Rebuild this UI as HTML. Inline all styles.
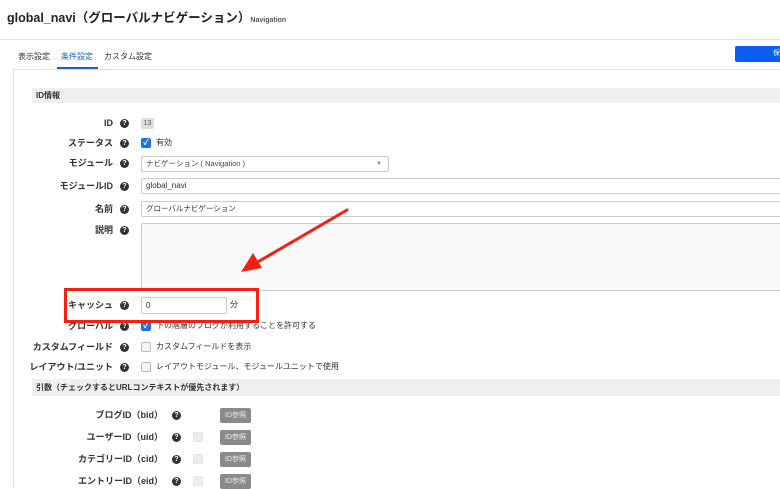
<!DOCTYPE html>
<html><head><meta charset="utf-8"><style>
*{margin:0;padding:0;box-sizing:border-box}
body{width:780px;height:487px;overflow:hidden;background:#fff;font-family:"Liberation Sans","Noto Sans CJK JP",sans-serif;color:#333;position:relative;line-height:1}
.a{position:absolute;white-space:nowrap}
.lbl{position:absolute;font-size:9px;line-height:11px;font-weight:bold;color:#333;text-align:right;white-space:nowrap}
.q{position:absolute;width:9px;height:9px;border-radius:50%;background:#333;color:#fff;font-size:7px;font-weight:bold;text-align:center;line-height:9px}
.in{position:absolute;border:1px solid #ccc;border-radius:2px;background:#fff;font-size:8px;color:#333;padding-left:4px}
.cb{position:absolute;width:10px;height:10px;border:1px solid #bbb;border-radius:2px;background:#f5f5f5}
.cbon{position:absolute;width:10px;height:10px;border-radius:2px;background:#1a73e8;color:#fff;font-size:8px;line-height:10px;text-align:center;font-weight:bold}
.t{position:absolute;font-size:8px;line-height:10px;color:#333;white-space:nowrap}
.btn{position:absolute;width:31px;height:15px;background:#8a8a8a;border-radius:2px;color:#eee;font-size:7px;text-align:center;line-height:15px}
.hd{position:absolute;left:32px;width:748px;background:#efefef;font-size:8px;font-weight:bold;padding-left:4px}
</style></head><body>
<div class="a" style="left:7px;top:11px;font-size:12.5px;line-height:15px;font-weight:bold;color:#222">global_navi（グローバルナビゲーション）<span style="font-size:7px;font-weight:bold;color:#555">Navigation</span></div>
<div class="a" style="left:0;top:39px;width:780px;height:1px;background:#e2e2e2"></div>
<div class="a" style="left:18px;top:52px;font-size:8px;line-height:10px;color:#333">表示設定</div>
<div class="a" style="left:61px;top:52px;font-size:8px;line-height:10px;color:#1a5fd0">条件設定</div>
<div class="a" style="left:57px;top:67px;width:41px;height:2px;background:#1a5fd0"></div>
<div class="a" style="left:104px;top:52px;font-size:8px;line-height:10px;color:#333">カスタム設定</div>
<div class="a" style="left:735px;top:46px;width:50px;height:16px;background:#0a5ef0;border-radius:2px;color:#fff;font-size:7px;line-height:16px;padding-left:38px">保</div>
<div class="a" style="left:13px;top:69px;width:767px;height:1px;background:#e0e0e0"></div>
<div class="a" style="left:13px;top:69px;width:1px;height:418px;background:#e0e0e0"></div>

<div class="hd" style="top:88px;height:15px;line-height:15px">ID情報</div>

<div class="lbl" style="right:667px;top:118px">ID</div><div class="q" style="left:120px;top:119px">?</div>
<div class="a" style="left:141px;top:118px;width:13px;height:11px;background:#ddd;border-radius:2px;font-size:7px;text-align:center;line-height:11px;color:#555">13</div>

<div class="lbl" style="right:667px;top:138px">ステータス</div><div class="q" style="left:120px;top:139px">?</div>
<div class="cbon" style="left:141px;top:138px">✓</div><div class="t" style="left:156px;top:138px">有効</div>

<div class="lbl" style="right:667px;top:158px">モジュール</div><div class="q" style="left:120px;top:159px">?</div>
<div class="in" style="left:141px;top:156px;width:248px;height:16px;line-height:14px;font-size:7.5px;color:#444">ナビゲーション ( Navigation )<span style="position:absolute;right:6px;top:0;font-size:6px;color:#888">▼</span></div>

<div class="lbl" style="right:667px;top:181px">モジュールID</div><div class="q" style="left:120px;top:182px">?</div>
<div class="in" style="left:141px;top:178px;width:645px;height:16px;line-height:14px">global_navi</div>

<div class="lbl" style="right:667px;top:204px">名前</div><div class="q" style="left:120px;top:205px">?</div>
<div class="in" style="left:141px;top:201px;width:645px;height:16px;line-height:14px;font-size:7.5px">グローバルナビゲーション</div>

<div class="lbl" style="right:667px;top:225px">説明</div><div class="q" style="left:120px;top:226px">?</div>
<div class="in" style="left:141px;top:223px;width:645px;height:68px;background:#fafafa"></div>

<div class="lbl" style="right:667px;top:300px">キャッシュ</div><div class="q" style="left:120px;top:301px">?</div>
<div class="in" style="left:141px;top:297px;width:86px;height:17px;line-height:15px">0</div>
<div class="t" style="left:230px;top:300px">分</div>
<div class="a" style="left:64px;top:288px;width:195px;height:35px;border:3px solid #f4210f;z-index:5"></div>

<div class="lbl" style="right:667px;top:321px">グローバル</div><div class="q" style="left:120px;top:322px">?</div>
<div class="cbon" style="left:141px;top:321px">✓</div><div class="t" style="left:156px;top:321px">下の階層のブログが利用することを許可する</div>

<div class="lbl" style="right:667px;top:342px">カスタムフィールド</div><div class="q" style="left:120px;top:343px">?</div>
<div class="cb" style="left:141px;top:342px"></div><div class="t" style="left:156px;top:342px">カスタムフィールドを表示</div>

<div class="lbl" style="right:667px;top:362px">レイアウト/ユニット</div><div class="q" style="left:120px;top:363px">?</div>
<div class="cb" style="left:141px;top:362px"></div><div class="t" style="left:156px;top:362px">レイアウトモジュール、モジュールユニットで使用</div>

<div class="hd" style="top:379px;height:17px;line-height:17px">引数（チェックするとURLコンテキストが優先されます）</div>

<div class="lbl" style="right:617px;top:410px">ブログID（bid）</div><div class="q" style="left:172px;top:411px">?</div>
<div class="btn" style="left:220px;top:408px">ID参照</div>
<div class="lbl" style="right:617px;top:432px">ユーザーID（uid）</div><div class="q" style="left:172px;top:433px">?</div>
<div class="cb" style="left:193px;top:432px;border-color:#e4e4e4;background:#eee"></div><div class="btn" style="left:220px;top:430px">ID参照</div>
<div class="lbl" style="right:617px;top:454px">カテゴリーID（cid）</div><div class="q" style="left:172px;top:455px">?</div>
<div class="cb" style="left:193px;top:454px;border-color:#e4e4e4;background:#eee"></div><div class="btn" style="left:220px;top:452px">ID参照</div>
<div class="lbl" style="right:617px;top:476px">エントリーID（eid）</div><div class="q" style="left:172px;top:477px">?</div>
<div class="cb" style="left:193px;top:476px;border-color:#e4e4e4;background:#eee"></div><div class="btn" style="left:220px;top:474px">ID参照</div>

<svg class="a" style="left:0;top:0;z-index:6" width="780" height="487">
<line x1="347" y1="210" x2="256" y2="263" stroke="#f4210f" stroke-width="3" stroke-linecap="round"/>
<polygon points="241,272 253,253 262,268" fill="#f4210f"/>
</svg>
</body></html>
